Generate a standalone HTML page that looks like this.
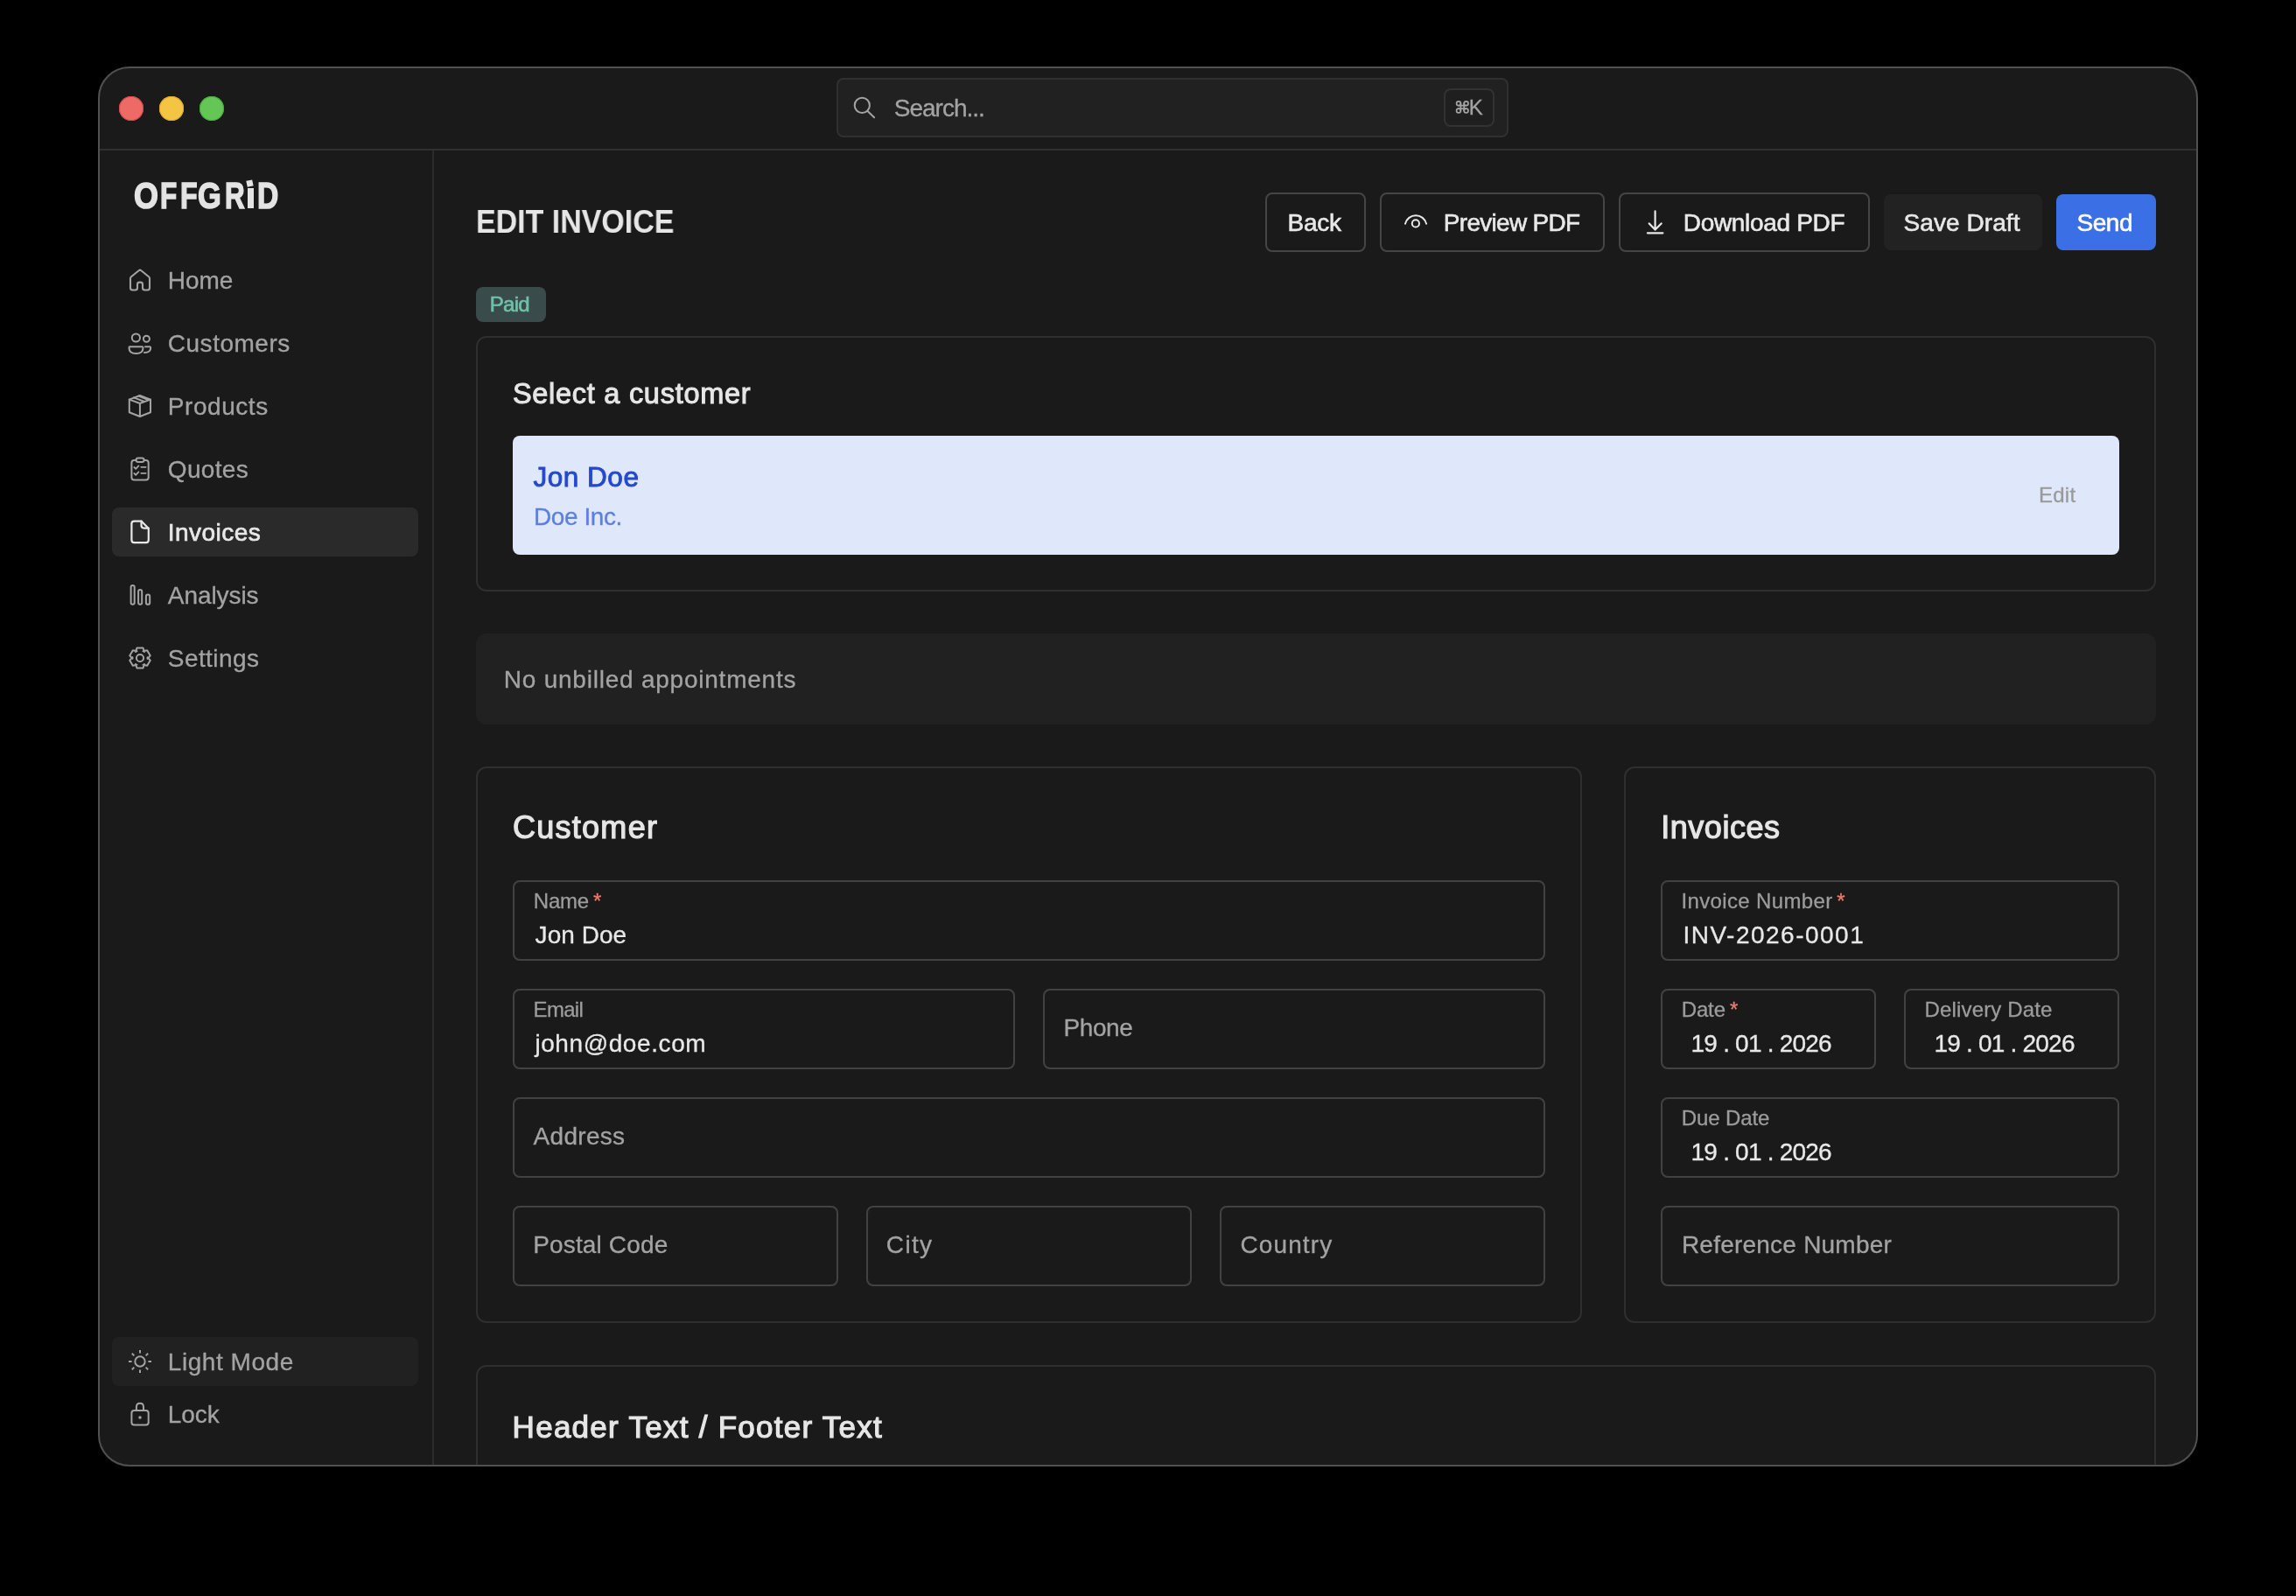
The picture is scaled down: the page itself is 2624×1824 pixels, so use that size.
<!DOCTYPE html>
<html><head><meta charset="utf-8"><title>Edit Invoice</title>
<style>
html,body{margin:0;padding:0;background:#000;width:2624px;height:1824px;overflow:hidden;}
body{font-family:"Liberation Sans",sans-serif;}
#clip{position:absolute;left:112px;top:76px;width:2400px;height:1600px;border-radius:36px;overflow:hidden;background:#1a1a1a;}
#inner{position:absolute;left:-112px;top:-76px;width:2624px;height:1824px;will-change:transform;}
.t{position:absolute;white-space:pre;}
.b{position:absolute;box-sizing:border-box;}
.ic{position:absolute;left:0;top:0;}
#frame{position:absolute;left:112px;top:76px;width:2400px;height:1600px;border-radius:36px;box-sizing:border-box;border:2px solid #505050;pointer-events:none;}
</style></head><body>
<div id="clip"><div id="inner">
<div id="win"></div>
<div class="b" style="left:112px;top:170px;width:2400px;height:2px;background:#303030;"></div>
<div class="b" style="left:494px;top:172px;width:2px;height:1504px;background:#2c2c2c;"></div>
<div class="b" style="left:136px;top:110px;width:28px;height:28px;border-radius:50%;background:#ee6a67;box-shadow:inset 0 0 0 1px #d64a46;"></div>
<div class="b" style="left:182px;top:110px;width:28px;height:28px;border-radius:50%;background:#f4c543;box-shadow:inset 0 0 0 1px #d9a92a;"></div>
<div class="b" style="left:228px;top:110px;width:28px;height:28px;border-radius:50%;background:#63c655;box-shadow:inset 0 0 0 1px #4aa83d;"></div>
<div class="b" style="left:956px;top:89px;width:768px;height:68px;background:#212121;border:2px solid #303030;border-radius:8px;"></div>
<div class="b" style="left:1650px;top:101px;width:58px;height:44px;background:#1f1f1f;border:2px solid #323232;border-radius:8px;"></div>
<div class="t" style="left:1021.80px;top:110.10px;font-size:28px;line-height:28px;color:#a3a3a3;letter-spacing:-1.012px;-webkit-text-stroke:0.3px #a3a3a3;">Search...</div>
<div class="t" style="left:1678.80px;top:111.38px;font-size:24px;line-height:24px;color:#a3a3a3;-webkit-text-stroke:0.3px #a3a3a3;">K</div>
<div class="t" style="left:152.80px;top:202.10px;font-size:43px;line-height:43px;color:#e4e4e4;font-weight:700;transform:scaleX(0.835);transform-origin:0 0;-webkit-text-stroke:1.6px #e4e4e4;">O</div>
<div class="t" style="left:183.00px;top:202.10px;font-size:43px;line-height:43px;color:#e4e4e4;font-weight:700;transform:scaleX(0.730);transform-origin:0 0;-webkit-text-stroke:1.6px #e4e4e4;">F</div>
<div class="t" style="left:205.70px;top:202.10px;font-size:43px;line-height:43px;color:#e4e4e4;font-weight:700;transform:scaleX(0.745);transform-origin:0 0;-webkit-text-stroke:1.6px #e4e4e4;">F</div>
<div class="t" style="left:226.10px;top:202.10px;font-size:43px;line-height:43px;color:#e4e4e4;font-weight:700;transform:scaleX(0.799);transform-origin:0 0;-webkit-text-stroke:1.6px #e4e4e4;">G</div>
<div class="t" style="left:256.70px;top:202.10px;font-size:43px;line-height:43px;color:#e4e4e4;font-weight:700;transform:scaleX(0.730);transform-origin:0 0;-webkit-text-stroke:1.6px #e4e4e4;">R</div>
<div class="t" style="left:294.30px;top:202.10px;font-size:43px;line-height:43px;color:#e4e4e4;font-weight:700;transform:scaleX(0.781);transform-origin:0 0;-webkit-text-stroke:1.6px #e4e4e4;">D</div>
<div class="b" style="left:282.5px;top:214.6px;width:7.100000000000023px;height:23.900000000000006px;background:#e4e4e4;"></div>
<div class="b" style="left:282.3px;top:205.6px;width:7.4px;height:7.4px;background:#e4e4e4;transform:rotate(-12deg);"></div>
<div class="b" style="left:128px;top:580px;width:350px;height:56px;background:#2a2a2a;border-radius:8px;"></div>
<div class="b" style="left:128px;top:1528px;width:350px;height:56px;background:#212121;border-radius:8px;"></div>
<div class="t" style="left:191.80px;top:306.80px;font-size:28px;line-height:28px;color:#a3a3a3;letter-spacing:-0.067px;-webkit-text-stroke:0.3px #a3a3a3;">Home</div>
<div class="t" style="left:191.80px;top:378.80px;font-size:28px;line-height:28px;color:#a3a3a3;letter-spacing:0.512px;-webkit-text-stroke:0.3px #a3a3a3;">Customers</div>
<div class="t" style="left:191.80px;top:450.80px;font-size:28px;line-height:28px;color:#a3a3a3;letter-spacing:0.557px;-webkit-text-stroke:0.3px #a3a3a3;">Products</div>
<div class="t" style="left:191.80px;top:522.80px;font-size:28px;line-height:28px;color:#a3a3a3;letter-spacing:0.340px;-webkit-text-stroke:0.3px #a3a3a3;">Quotes</div>
<div class="t" style="left:191.80px;top:594.80px;font-size:28px;line-height:28px;color:#e8e8e8;letter-spacing:0.457px;-webkit-text-stroke:0.7px #e8e8e8;">Invoices</div>
<div class="t" style="left:191.80px;top:666.80px;font-size:28px;line-height:28px;color:#a3a3a3;letter-spacing:-0.071px;-webkit-text-stroke:0.3px #a3a3a3;">Analysis</div>
<div class="t" style="left:191.80px;top:738.80px;font-size:28px;line-height:28px;color:#a3a3a3;letter-spacing:0.429px;-webkit-text-stroke:0.3px #a3a3a3;">Settings</div>
<div class="t" style="left:191.80px;top:1542.80px;font-size:28px;line-height:28px;color:#a3a3a3;letter-spacing:0.544px;-webkit-text-stroke:0.3px #a3a3a3;">Light Mode</div>
<div class="t" style="left:191.80px;top:1602.80px;font-size:28px;line-height:28px;color:#a3a3a3;letter-spacing:-0.067px;-webkit-text-stroke:0.3px #a3a3a3;">Lock</div>
<div class="t" style="left:544.10px;top:234.96px;font-size:37.5px;line-height:37.5px;color:#e6e6e6;font-weight:700;transform:scaleX(0.9056);transform-origin:0 0;">EDIT INVOICE</div>
<div class="b" style="left:1446px;top:220px;width:115px;height:68px;border:2px solid #454545;border-radius:8px;"></div>
<div class="b" style="left:1577px;top:220px;width:257px;height:68px;border:2px solid #454545;border-radius:8px;"></div>
<div class="b" style="left:1850px;top:220px;width:287px;height:68px;border:2px solid #454545;border-radius:8px;"></div>
<div class="b" style="left:2153px;top:222px;width:181px;height:64px;background:#222222;border-radius:8px;"></div>
<div class="b" style="left:2350px;top:222px;width:114px;height:64px;background:#3b6fe6;border-radius:8px;"></div>
<div class="t" style="left:1471.50px;top:240.70px;font-size:28px;line-height:28px;color:#e8e8e8;letter-spacing:-0.233px;-webkit-text-stroke:0.6px #e8e8e8;">Back</div>
<div class="t" style="left:1649.80px;top:240.70px;font-size:28px;line-height:28px;color:#e8e8e8;letter-spacing:-0.710px;-webkit-text-stroke:0.6px #e8e8e8;">Preview PDF</div>
<div class="t" style="left:1923.80px;top:240.70px;font-size:28px;line-height:28px;color:#e8e8e8;letter-spacing:-0.318px;-webkit-text-stroke:0.6px #e8e8e8;">Download PDF</div>
<div class="t" style="left:2175.50px;top:240.70px;font-size:28px;line-height:28px;color:#e8e8e8;letter-spacing:0.078px;-webkit-text-stroke:0.6px #e8e8e8;">Save Draft</div>
<div class="t" style="left:2373.40px;top:240.70px;font-size:28px;line-height:28px;color:#ffffff;letter-spacing:-0.433px;-webkit-text-stroke:0.6px #ffffff;">Send</div>
<div class="b" style="left:544px;top:328px;width:80px;height:40px;background:#394b4b;border-radius:8px;"></div>
<div class="t" style="left:559.80px;top:336.18px;font-size:24px;line-height:24px;color:#6fc1a8;letter-spacing:-0.733px;-webkit-text-stroke:0.6px #6fc1a8;">Paid</div>
<div class="b" style="left:544px;top:384px;width:1920px;height:292px;border:2px solid #2f2f2f;border-radius:12px;"></div>
<div class="t" style="left:585.90px;top:433.59px;font-size:32.5px;line-height:32.5px;color:#e6e6e6;letter-spacing:0.725px;-webkit-text-stroke:1.0px #e6e6e6;">Select a customer</div>
<div class="b" style="left:586px;top:498px;width:1836px;height:136px;background:#dfe8fb;border-radius:8px;"></div>
<div class="t" style="left:609.40px;top:529.84px;font-size:31.5px;line-height:31.5px;color:#2548d1;letter-spacing:0.533px;-webkit-text-stroke:0.9px #2548d1;">Jon Doe</div>
<div class="t" style="left:610.00px;top:577.00px;font-size:28px;line-height:28px;color:#5c7fe0;letter-spacing:-0.429px;-webkit-text-stroke:0.3px #5c7fe0;">Doe Inc.</div>
<div class="t" style="left:2330.00px;top:554.28px;font-size:24px;line-height:24px;color:#9a9a9a;letter-spacing:0.233px;-webkit-text-stroke:0.3px #9a9a9a;">Edit</div>
<div class="b" style="left:544px;top:724px;width:1920px;height:104px;background:#212121;border-radius:12px;"></div>
<div class="t" style="left:575.80px;top:763.00px;font-size:28px;line-height:28px;color:#a3a3a3;letter-spacing:0.770px;-webkit-text-stroke:0.3px #a3a3a3;">No unbilled appointments</div>
<div class="b" style="left:544px;top:876px;width:1264px;height:636px;border:2px solid #2f2f2f;border-radius:12px;"></div>
<div class="t" style="left:585.90px;top:928.43px;font-size:36px;line-height:36px;color:#e6e6e6;letter-spacing:1.286px;-webkit-text-stroke:1.2px #e6e6e6;">Customer</div>
<div class="b" style="left:586px;top:1006px;width:1180px;height:92px;border:2px solid #424242;border-radius:8px;"></div>
<div class="t" style="left:609.80px;top:1018.18px;font-size:24px;line-height:24px;color:#9c9c9c;letter-spacing:-0.233px;-webkit-text-stroke:0.3px #9c9c9c;">Name</div>
<div class="t" style="left:678.10px;top:1018.18px;font-size:24px;line-height:24px;color:#f07b6f;-webkit-text-stroke:0.3px #f07b6f;">*</div>
<div class="t" style="left:611.60px;top:1054.80px;font-size:28px;line-height:28px;color:#e8e8e8;letter-spacing:0.033px;-webkit-text-stroke:0.3px #e8e8e8;">Jon Doe</div>
<div class="b" style="left:586px;top:1130px;width:574px;height:92px;border:2px solid #424242;border-radius:8px;"></div>
<div class="t" style="left:609.60px;top:1142.18px;font-size:24px;line-height:24px;color:#9c9c9c;letter-spacing:-0.700px;-webkit-text-stroke:0.3px #9c9c9c;">Email</div>
<div class="t" style="left:611.40px;top:1178.80px;font-size:28px;line-height:28px;color:#e8e8e8;letter-spacing:0.591px;-webkit-text-stroke:0.3px #e8e8e8;">john@doe.com</div>
<div class="b" style="left:1192px;top:1130px;width:574px;height:92px;border:2px solid #424242;border-radius:8px;"></div>
<div class="t" style="left:1215.60px;top:1160.80px;font-size:28px;line-height:28px;color:#a3a3a3;letter-spacing:-0.450px;-webkit-text-stroke:0.3px #a3a3a3;">Phone</div>
<div class="b" style="left:586px;top:1254px;width:1180px;height:92px;border:2px solid #424242;border-radius:8px;"></div>
<div class="t" style="left:609.60px;top:1284.80px;font-size:28px;line-height:28px;color:#a3a3a3;letter-spacing:0.300px;-webkit-text-stroke:0.3px #a3a3a3;">Address</div>
<div class="b" style="left:586px;top:1378px;width:372px;height:92px;border:2px solid #424242;border-radius:8px;"></div>
<div class="t" style="left:609.20px;top:1408.80px;font-size:28px;line-height:28px;color:#a3a3a3;letter-spacing:0.150px;-webkit-text-stroke:0.3px #a3a3a3;">Postal Code</div>
<div class="b" style="left:990px;top:1378px;width:372px;height:92px;border:2px solid #424242;border-radius:8px;"></div>
<div class="t" style="left:1012.80px;top:1408.80px;font-size:28px;line-height:28px;color:#a3a3a3;letter-spacing:1.367px;-webkit-text-stroke:0.3px #a3a3a3;">City</div>
<div class="b" style="left:1394px;top:1378px;width:372px;height:92px;border:2px solid #424242;border-radius:8px;"></div>
<div class="t" style="left:1417.50px;top:1408.80px;font-size:28px;line-height:28px;color:#a3a3a3;letter-spacing:1.100px;-webkit-text-stroke:0.3px #a3a3a3;">Country</div>
<div class="b" style="left:1856px;top:876px;width:608px;height:636px;border:2px solid #2f2f2f;border-radius:12px;"></div>
<div class="t" style="left:1898.20px;top:928.43px;font-size:36px;line-height:36px;color:#e6e6e6;letter-spacing:0.543px;-webkit-text-stroke:1.2px #e6e6e6;">Invoices</div>
<div class="b" style="left:1898px;top:1006px;width:524px;height:92px;border:2px solid #424242;border-radius:8px;"></div>
<div class="t" style="left:1921.40px;top:1018.18px;font-size:24px;line-height:24px;color:#9c9c9c;letter-spacing:0.362px;-webkit-text-stroke:0.3px #9c9c9c;">Invoice Number</div>
<div class="t" style="left:2099.20px;top:1018.18px;font-size:24px;line-height:24px;color:#f07b6f;-webkit-text-stroke:0.3px #f07b6f;">*</div>
<div class="t" style="left:1923.50px;top:1054.80px;font-size:28px;line-height:28px;color:#e8e8e8;letter-spacing:1.492px;-webkit-text-stroke:0.3px #e8e8e8;">INV-2026-0001</div>
<div class="b" style="left:1898px;top:1130px;width:246px;height:92px;border:2px solid #424242;border-radius:8px;"></div>
<div class="t" style="left:1921.70px;top:1142.18px;font-size:24px;line-height:24px;color:#9c9c9c;letter-spacing:-0.133px;-webkit-text-stroke:0.3px #9c9c9c;">Date</div>
<div class="t" style="left:1977.00px;top:1142.18px;font-size:24px;line-height:24px;color:#f07b6f;-webkit-text-stroke:0.3px #f07b6f;">*</div>
<div class="t" style="left:1932.60px;top:1178.80px;font-size:28px;line-height:28px;color:#e8e8e8;letter-spacing:-0.792px;-webkit-text-stroke:0.3px #e8e8e8;">19 . 01 . 2026</div>
<div class="b" style="left:2176px;top:1130px;width:246px;height:92px;border:2px solid #424242;border-radius:8px;"></div>
<div class="t" style="left:2199.60px;top:1142.18px;font-size:24px;line-height:24px;color:#9c9c9c;letter-spacing:0.150px;-webkit-text-stroke:0.3px #9c9c9c;">Delivery Date</div>
<div class="t" style="left:2210.50px;top:1178.80px;font-size:28px;line-height:28px;color:#e8e8e8;letter-spacing:-0.792px;-webkit-text-stroke:0.3px #e8e8e8;">19 . 01 . 2026</div>
<div class="b" style="left:1898px;top:1254px;width:524px;height:92px;border:2px solid #424242;border-radius:8px;"></div>
<div class="t" style="left:1921.70px;top:1266.18px;font-size:24px;line-height:24px;color:#9c9c9c;letter-spacing:-0.100px;-webkit-text-stroke:0.3px #9c9c9c;">Due Date</div>
<div class="t" style="left:1932.60px;top:1302.80px;font-size:28px;line-height:28px;color:#e8e8e8;letter-spacing:-0.792px;-webkit-text-stroke:0.3px #e8e8e8;">19 . 01 . 2026</div>
<div class="b" style="left:1898px;top:1378px;width:524px;height:92px;border:2px solid #424242;border-radius:8px;"></div>
<div class="t" style="left:1921.90px;top:1408.80px;font-size:28px;line-height:28px;color:#a3a3a3;letter-spacing:0.227px;-webkit-text-stroke:0.3px #a3a3a3;">Reference Number</div>
<div class="b" style="left:544px;top:1560px;width:1920px;height:200px;border:2px solid #2f2f2f;border-radius:12px;"></div>
<div class="t" style="left:585.60px;top:1613.07px;font-size:35px;line-height:35px;color:#e6e6e6;letter-spacing:1.271px;-webkit-text-stroke:1.2px #e6e6e6;">Header Text / Footer Text</div>
<svg class="ic" width="2624" height="1824" viewBox="0 0 2624 1824" fill="none" stroke-width="2" stroke-linecap="round" stroke-linejoin="round"><circle cx="985.3" cy="120.4" r="8.6" stroke="#a3a3a3"/><path d="M991.8 127.2 L999.1 134.2" stroke="#a3a3a3"/><g stroke="#a3a3a3" stroke-width="1.7"><path d="M1667 120.6 H1675.6 M1667 124.2 H1675.6 M1669.4 118.2 V126.5 M1673.2 118.2 V126.5"/><circle cx="1667" cy="118.2" r="2.4"/><circle cx="1675.6" cy="118.2" r="2.4"/><circle cx="1667" cy="126.5" r="2.4"/><circle cx="1675.6" cy="126.5" r="2.4"/></g><path d="M151.5 331.5 Q149 331.5 149 329 V318.2 Q149 317 150 316.2 L158.6 309.2 Q160 308 161.4 309.2 L170 316.2 Q171 317 171 318.2 V329 Q171 331.5 168.5 331.5 H165.5 Q163 331.5 163 329 V325 Q163 322.6 160.6 322.6 H159.4 Q157 322.6 157 325 V329 Q157 331.5 154.5 331.5 Z" stroke="#a3a3a3" stroke-width="2.1"/><circle cx="155.4" cy="386" r="4.6" stroke="#a3a3a3"/><circle cx="167.4" cy="387.2" r="3.5" stroke="#a3a3a3"/><path d="M148 396.2 H162.6 Q163.5 396.2 163.5 397.5 Q163.5 404 155.6 404 Q147.5 404 147.5 397.5 Q147.5 396.2 148 396.2 Z" stroke="#a3a3a3"/><path d="M166 396.2 H171 Q172.2 396.2 172.2 397.5 Q172.2 403 165 403" stroke="#a3a3a3"/><path d="M159.9 452 L172 456.6 V471.2 L159.9 476 L147.8 471.2 V456.6 Z" stroke="#a3a3a3"/><path d="M147.8 456.6 L159.9 461 L172 456.6 M159.9 461 V476" stroke="#a3a3a3"/><path d="M153 454.4 L165 459 M158.5 452.6 L169.5 457" stroke="#a3a3a3"/><rect x="150.4" y="526" width="19.3" height="22.4" rx="3" stroke="#a3a3a3"/><rect x="155.6" y="523.4" width="9" height="4.6" rx="2.3" stroke="#a3a3a3" fill="#1b1b1b"/><path d="M153.4 534 L155.2 535.8 L158.4 532.4 M153.4 541 L155.2 542.8 L158.4 539.4 M161.3 533.8 H166.6 M161.3 540.8 H166.6" stroke="#a3a3a3" stroke-width="1.8"/><path d="M153 595.6 H161.5 L169.8 604 V617 Q169.8 620.1 166.8 620.1 H153.4 Q150.4 620.1 150.4 617 V598.6 Q150.4 595.6 153.4 595.6 Z" stroke="#e8e8e8" stroke-width="2.2"/><path d="M161.5 595.6 V600.6 Q161.5 603.6 164.5 603.6 H169.8" stroke="#e8e8e8" stroke-width="2.2"/><rect x="149.6" y="669" width="4.1" height="21.8" rx="2.05" stroke="#a3a3a3" stroke-width="2"/><rect x="158.1" y="674" width="4.1" height="16.8" rx="2.05" stroke="#a3a3a3" stroke-width="2"/><rect x="166.9" y="679.6" width="4.3" height="11.2" rx="2.15" stroke="#a3a3a3" stroke-width="2"/><path d="M155.00 745.00 L156.45 740.54 L163.55 740.54 L165.00 745.00 L163.56 744.17 L168.16 743.20 L171.70 749.34 L168.56 752.83 L168.56 751.17 L171.70 754.66 L168.16 760.80 L163.56 759.83 L165.00 759.00 L163.55 763.46 L156.45 763.46 L155.00 759.00 L156.44 759.83 L151.84 760.80 L148.30 754.66 L151.44 751.17 L151.44 752.83 L148.30 749.34 L151.84 743.20 L156.44 744.17 Z" stroke="#a3a3a3" stroke-width="2"/><circle cx="160" cy="752" r="4.1" stroke="#a3a3a3" stroke-width="2"/><circle cx="160" cy="1556" r="5.7" stroke="#a3a3a3" stroke-width="2"/><path d="M169.40 1556.00 L173.00 1556.00 M166.65 1562.65 L169.19 1565.19 M160.00 1565.40 L160.00 1569.00 M153.35 1562.65 L150.81 1565.19 M150.60 1556.00 L147.00 1556.00 M153.35 1549.35 L150.81 1546.81 M160.00 1546.60 L160.00 1543.00 M166.65 1549.35 L169.19 1546.81 " stroke="#a3a3a3" stroke-width="2" stroke-linecap="butt"/><path d="M155.9 1611.5 V1608 Q155.9 1603.7 160 1603.7 Q164 1603.7 164 1608 V1611.5" stroke="#a3a3a3" stroke-width="2"/><rect x="150.4" y="1611.9" width="19.3" height="16.5" rx="3" stroke="#a3a3a3" stroke-width="2"/><circle cx="160" cy="1620" r="1.8" fill="#a3a3a3" stroke="none"/><path d="M1606 255.7 A12.4 12.4 0 0 1 1630.1 255.7" stroke="#e8e8e8" stroke-width="2"/><circle cx="1617.9" cy="255.4" r="4.1" stroke="#e8e8e8" stroke-width="2"/><path d="M1891.6 241.4 V262.6 M1884.8 255.4 L1891.6 262.6 L1898.6 255.4 M1882.9 266.3 H1900.4" stroke="#e8e8e8" stroke-width="2.2"/></svg>
</div></div>
<div id="frame"></div>
</body></html>
